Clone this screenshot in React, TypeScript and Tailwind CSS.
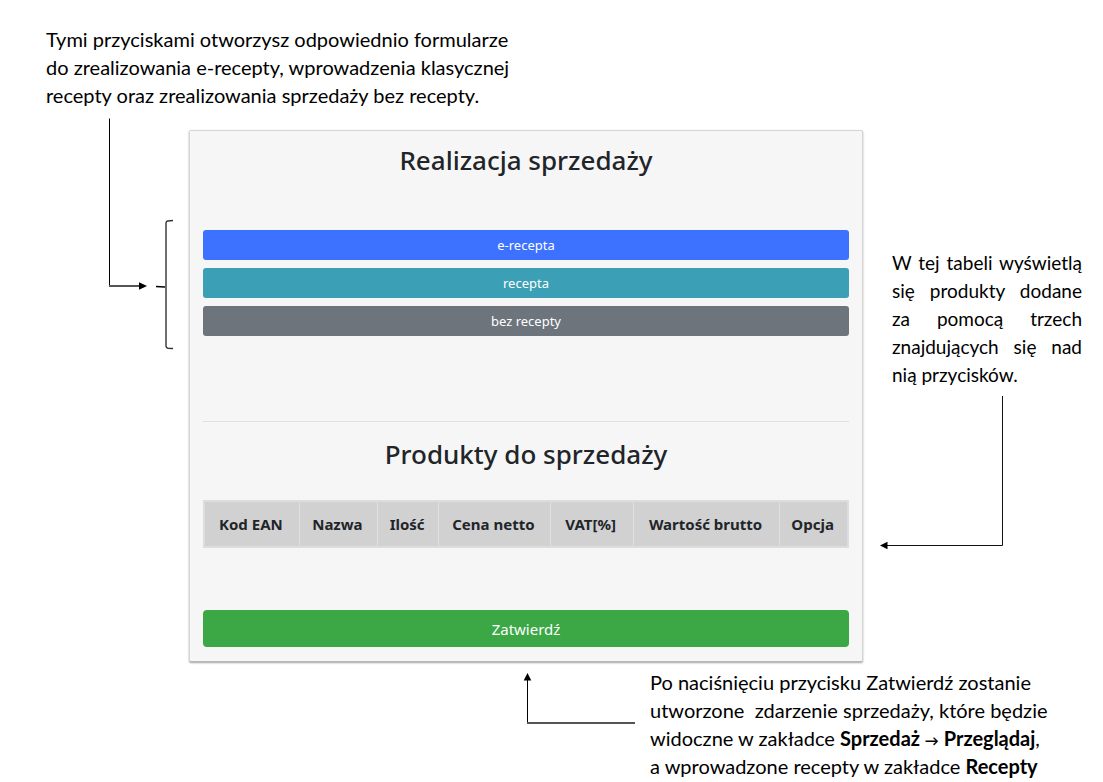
const columns = [
  { label: "Kod EAN", width: "w-[95px]" },
  { label: "Nazwa", width: "w-[78px]" },
  { label: "Ilość", width: "w-[61px]" },
  { label: "Cena netto", width: "w-[111px]" },
  { label: "VAT[%]", width: "w-[83px]" },
  { label: "Wartość brutto", width: "w-[146px]" },
  { label: "Opcja", width: "w-[68px]" },
];

const smallButton = "block h-[30px] w-full rounded-[3px] text-[13px] leading-[30px] text-white";
const heading = "text-center text-[26px] leading-8 font-medium text-[#212529]";

function BracketArrow() {
  return (
    <svg width="189" height="240" viewBox="0 0 189 240" fill="none" aria-hidden="true">
      <path d="M109.5 1.5V169.5" stroke="#000" />
      <path d="M109 169H140" stroke="#555" strokeWidth="2" />
      <path d="M139 165.2L147 169L139 172.8Z" fill="#000" />
      <path d="M173 103.5L167.5 104Q166 104.3 166 106V229Q166 231 168 231.3L173 231.5" stroke="#333" strokeWidth="1.4" />
      <path d="M156 169.5L165 170" stroke="#000" strokeWidth="1.4" />
    </svg>
  );
}

function TableArrow() {
  return (
    <svg className="block" width="124" height="154" viewBox="0 0 124 154" fill="none" aria-hidden="true">
      <path d="M122.5 0V149.5H7" stroke="#111" />
      <path d="M0 149.5L7.5 145.7V153.3Z" fill="#000" />
    </svg>
  );
}

function ConfirmArrow() {
  return (
    <svg width="112" height="56" viewBox="0 0 112 56" fill="none" aria-hidden="true">
      <path d="M4.5 7V55" stroke="#000" />
      <path d="M4 55H112" stroke="#555" strokeWidth="2" />
      <path d="M4.5 5L8.3 12.5H0.7Z" fill="#000" />
    </svg>
  );
}

function SalesCard() {
  return (
    <section className="mt-[14px] rounded-xs border border-[#d6d6d6] border-b-[#b8b8b8] bg-[#f6f6f6] px-[13px] pt-[13px] pb-[14px] font-['Noto_Sans','Open_Sans',sans-serif] shadow-[0_1px_2px_#a3a3a3]">
      <h1 className={heading}>Realizacja sprzedaży</h1>
      <div className="mt-[54px] flex flex-col gap-2">
        <button type="button" className={smallButton + " bg-[#3c72ff]"}>e-recepta</button>
        <button type="button" className={smallButton + " bg-[#3b9fb6]"}>recepta</button>
        <button type="button" className={smallButton + " bg-[#6d747b]"}>bez recepty</button>
      </div>
      <hr className="mt-[85px] border-[#dfe0e1]" />
      <h2 className={heading + " mt-4"}>Produkty do sprzedaży</h2>
      <table className="mt-[30px] w-full table-fixed border-collapse border-2 border-[#dcdde1] bg-[#d1d1d2] text-[15px] text-[#212529]">
        <thead>
          <tr>
            {columns.map((column) => (
              <th key={column.label} scope="col" className={column.width + " h-[46px] border-x border-[#dfe0e3] pr-0.5 pl-0 text-center font-bold whitespace-nowrap"}>
                {column.label}
              </th>
            ))}
          </tr>
        </thead>
      </table>
      <button type="button" className="mt-[62px] block h-[37px] w-full rounded bg-[#3ba845] text-[15px] text-white">
        Zatwierdź
      </button>
    </section>
  );
}

export default function App() {
  return (
    <main className="bg-white font-['Lato',sans-serif] text-[20px] leading-7 text-black">
      <p className="pt-[25px] pb-[7px] pl-[46px]">
        Tymi przyciskami otworzysz odpowiednio formularze
        <br />
        do zrealizowania e-recepty, wprowadzenia klasycznej
        <br />
        recepty oraz zrealizowania sprzedaży bez recepty.
      </p>
      <div className="grid grid-cols-[189px_minmax(0,1fr)_240px] items-start">
        <div className="pt-px">
          <BracketArrow />
        </div>
        <SalesCard />
        <aside className="pt-[133px] pr-[21px] pl-[17px]">
          <p className="pl-3 text-justify text-[19px] leading-7">
            W tej tabeli wyświetlą się produkty dodane za pomocą trzech znajdujących się nad nią przycisków.
          </p>
          <div className="pt-[7px]">
            <TableArrow />
          </div>
        </aside>
      </div>
      <div className="flex items-start gap-[15px] pt-[6px] pl-[523px]">
        <ConfirmArrow />
        <p className="whitespace-nowrap">
          Po naciśnięciu przycisku Zatwierdź zostanie
          <br />
          utworzone&nbsp; zdarzenie sprzedaży, które będzie
          <br />
          widoczne w zakładce <b>Sprzedaż <span className="text-sm leading-none">→</span> Przeglądaj</b>,
          <br />a wprowadzone recepty w zakładce <b>Recepty</b>
        </p>
      </div>
    </main>
  );
}
